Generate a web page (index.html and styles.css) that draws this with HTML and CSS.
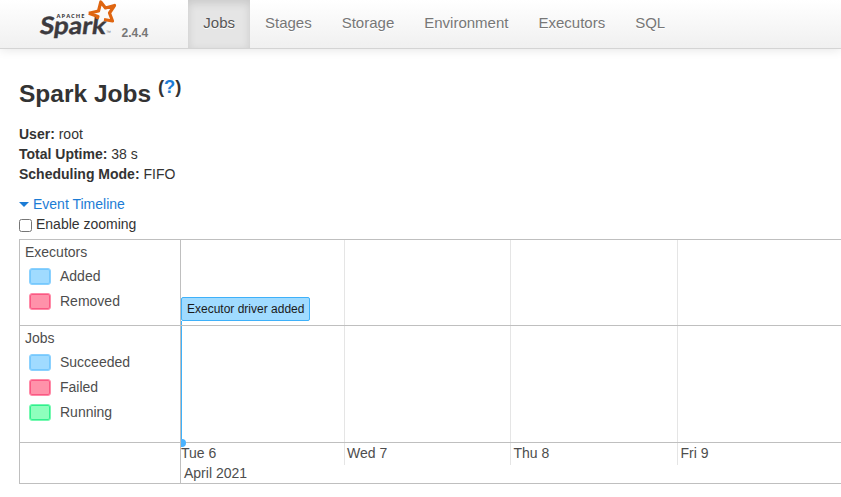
FILE: index.html
```html
<!DOCTYPE html>
<html lang="en">
<head>
<meta charset="utf-8">
<title>Spark Jobs</title>
<link rel="stylesheet" href="styles.css">
</head>
<body>
<nav class="navbar">
  <a class="brand">
    <svg class="logo" width="80" height="40" viewBox="0 0 80 40">
      <text class="logo-apache" x="17.500" y="17.500" textLength="28">APACHE</text>
      <text class="logo-spark" transform="translate(0 33.500) skewX(-8)" x="0" y="0" textLength="66" lengthAdjust="spacingAndGlyphs">Spark</text>
      <path class="star" d="M49.800 13.200 L59.500 11 L61.800 2 L66.500 8 L75.500 5.500 L70.500 13 L73.500 21 L65 19.500"/>
      <path class="star" d="M49.800 13.200 L59 16.500 L58 19"/>
      <text class="logo-tm" x="67" y="34">™</text>
    </svg>
    <span class="version">2.4.4</span>
  </a>
  <ul class="nav">
    <li class="active">Jobs</li><li>Stages</li><li>Storage</li><li>Environment</li><li>Executors</li><li>SQL</li>
  </ul>
</nav>
<main>
  <h3>Spark Jobs <sup>(<a>?</a>)</sup></h3>
  <ul class="summary">
    <li><strong>User:</strong> root</li>
    <li><strong>Total Uptime:</strong> 38 s</li>
    <li><strong>Scheduling Mode:</strong> FIFO</li>
  </ul>
  <a class="toggle"><span class="arrow"></span>Event Timeline</a>
  <label class="zooming"><input type="checkbox"><span>Enable zooming</span></label>
  <section class="timeline">
    <div class="group">
      <div class="group-title">Executors</div>
      <div class="legend"><i class="swatch blue"></i>Added</div>
      <div class="legend"><i class="swatch red"></i>Removed</div>
    </div>
    <div class="lane executors"><div class="event">Executor driver added</div></div>
    <div class="group">
      <div class="group-title">Jobs</div>
      <div class="legend"><i class="swatch blue"></i>Succeeded</div>
      <div class="legend"><i class="swatch red"></i>Failed</div>
      <div class="legend"><i class="swatch green"></i>Running</div>
    </div>
    <div class="lane jobs"><span class="dot"></span></div>
    <div class="group"></div>
    <div class="lane axis">
      <div class="days"><span>Tue 6</span><span>Wed 7</span><span>Thu 8</span><span>Fri 9</span></div>
      <div class="month">April 2021</div>
    </div>
    <div class="gridlines"><i></i><i></i><i></i><i></i></div>
  </section>
</main>
</body>
</html>
```
FILE: styles.css
```css
* { box-sizing: border-box; }
body {
  margin: 0;
  overflow: hidden;
  background: #fff;
  color: #333;
  font: 14px/20px "Liberation Sans", Arial, sans-serif;
}
ul { list-style: none; margin: 0; padding: 0; }
a { color: #1c7cd5; }
.navbar {
  display: flex;
  height: 49px;
  border-bottom: 1px solid #d4d4d4;
  background: linear-gradient(#fff, #f0f0f0);
  box-shadow: 0 1px 10px rgba(0, 0, 0, .1);
}
.brand { display: flex; width: 188.300px; padding-left: 39px; color: #777; }
.logo { flex: none; overflow: visible; }
.logo-apache { font: bold 5.8px "Open Sans", sans-serif; fill: #3c3a3e; }
.logo-spark { font: bold 24px Lato, sans-serif; fill: #3c3a3e; stroke: #3c3a3e; stroke-width: .4; }
.logo-tm { font: 5px "Liberation Sans", sans-serif; fill: #777; }
.star { fill: none; stroke: #df6510; stroke-width: 3.2; stroke-linejoin: round; }
.version { margin: 23px 0 0 2.500px; font-size: 12px; font-weight: bold; }
.nav { display: flex; font-size: 15px; color: #777; text-shadow: 0 1px 0 #fff; }
.nav li { height: 48px; padding: 13px 15px 0; }
.nav .active { color: #555; background: #e5e5e5; box-shadow: inset 0 3px 8px rgba(0, 0, 0, .125); }
main { padding: 25px 0 0 19px; }
h3 { margin: 0 0 10px; font-size: 24.5px; line-height: 40px; }
sup { position: relative; top: -.5em; font-size: 18.4px; line-height: 0; vertical-align: baseline; }
.toggle { display: flex; align-items: center; margin-top: 10px; }
.arrow { width: 10px; margin-right: 4px; border: 5px solid transparent; border-top-color: #1c7cd5; border-bottom: 0; }
.zooming { display: flex; height: 25px; }
.zooming input { width: 13px; height: 13px; margin: 5px 4px 0 0; }
.timeline {
  position: relative;
  display: grid;
  grid-template-columns: 162px 1fr;
  grid-template-rows: 86px 117px 41px;
  border-top: 1px solid #bfbfbf;
  color: #4d4d4d;
}
.group { padding: 2px 5px; border: solid #bfbfbf; border-width: 0 1px 1px; }
.lane { position: relative; z-index: 1; border-bottom: 1px solid #bfbfbf; }
.legend { display: flex; height: 25px; padding: 2px 0 0 4px; }
.group-title + .legend { margin-top: 2px; }
.swatch { width: 22px; height: 17px; margin: 2px 9px 0 0; border: 1px solid; border-radius: 3px; }
.blue { background: #a0dbff; border-color: #8bd1fe; box-shadow: inset 0 0 0 1px #75c8fd; }
.red { background: #ff92aa; border-color: #ff8ba8; box-shadow: inset 0 0 0 1px #fa5883; }
.green { background: #8effbd; border-color: #76f9b1; box-shadow: inset 0 0 0 1px #30ef8e; }
.executors { display: flex; align-items: flex-end; padding-bottom: 4px; }
.event {
  width: 129px;
  height: 24px;
  padding-left: 5px;
  border: 1px solid #3eb1fa;
  border-radius: 2px;
  background: #a0dbff;
  color: #1a1a1a;
  font-size: 12px;
  line-height: 22px;
}
.executors::after { content: ""; position: absolute; left: 0; bottom: 0; width: 1px; height: 4px; background: #3eb1fa; }
.jobs { border-left: 1px solid #3eb1fa; }
.dot { position: absolute; left: -1px; bottom: -5px; width: 5px; height: 8px; border-radius: 0 4px 4px 0; background: #4bb3ff; }
.days, .gridlines { display: grid; grid-template-columns: 163px 166px 167px 1fr; }
.days span { padding-left: 3.500px; }
.days span:first-child { padding-left: 0; }
.days span:nth-child(2) { padding-left: 3px; }
.month { padding-left: 3px; }
.gridlines { position: absolute; left: 162px; right: 0; top: 0; height: 225px; }
.gridlines i + i { border-left: 1px solid #e5e5e5; }
```
